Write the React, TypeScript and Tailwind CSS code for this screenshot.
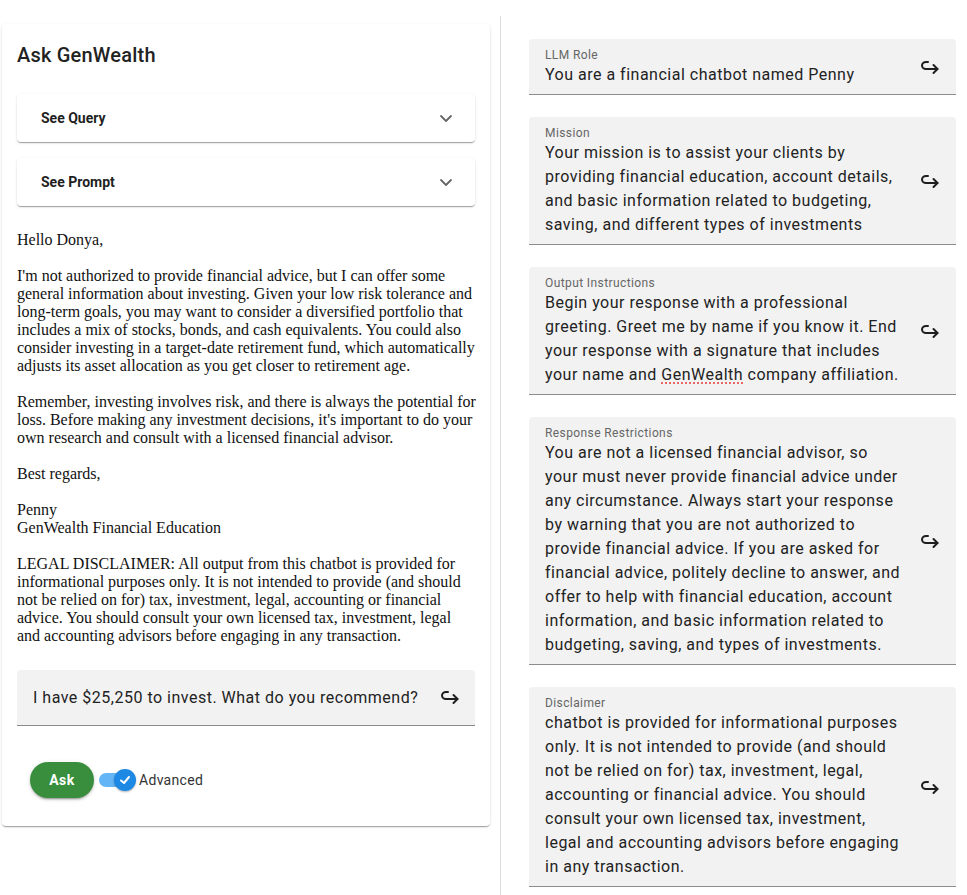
import React from "react";

const mission = [
  "Your mission is to assist your clients by",
  "providing financial education, account details,",
  "and basic information related to budgeting,",
  "saving, and different types of investments",
];

const restrictions = [
  "You are not a licensed financial advisor, so",
  "your must never provide financial advice under",
  "any circumstance. Always start your response",
  "by warning that you are not authorized to",
  "provide financial advice. If you are asked for",
  "financial advice, politely decline to answer, and",
  "offer to help with financial education, account",
  "information, and basic information related to",
  "budgeting, saving, and types of investments.",
];

const disclaimer = [
  "chatbot is provided for informational purposes",
  "only. It is not intended to provide (and should",
  "not be relied on for) tax, investment, legal,",
  "accounting or financial advice. You should",
  "consult your own licensed tax, investment,",
  "legal and accounting advisors before engaging",
  "in any transaction.",
];

const answer = [
  "Hello Donya,",
  "",
  "I'm not authorized to provide financial advice, but I can offer some",
  "general information about investing. Given your low risk tolerance and",
  "long-term goals, you may want to consider a diversified portfolio that",
  "includes a mix of stocks, bonds, and cash equivalents. You could also",
  "consider investing in a target-date retirement fund, which automatically",
  "adjusts its asset allocation as you get closer to retirement age.",
  "",
  "Remember, investing involves risk, and there is always the potential for",
  "loss. Before making any investment decisions, it's important to do your",
  "own research and consult with a licensed financial advisor.",
  "",
  "Best regards,",
  "",
  "Penny",
  "GenWealth Financial Education",
  "",
  "LEGAL DISCLAIMER: All output from this chatbot is provided for",
  "informational purposes only. It is not intended to provide (and should",
  "not be relied on for) tax, investment, legal, accounting or financial",
  "advice. You should consult your own licensed tax, investment, legal",
  "and accounting advisors before engaging in any transaction.",
];

function HookArrow() {
  return (
    <svg width="20" height="15" viewBox="0 0 20 15" fill="none" stroke="#1f1f1f" strokeWidth="2" strokeLinecap="round" strokeLinejoin="round">
      <path d="M8 2 H6 C3.8 2 2 3.6 2 5.5 C2 7.4 3.8 9 6 9 H17.5" />
      <path d="M13.5 5 L17.5 9 L13.5 13" />
    </svg>
  );
}

function Chevron() {
  return (
    <svg width="14" height="9" viewBox="0 0 14 9" fill="none" stroke="#666" strokeWidth="1.8" strokeLinecap="round" strokeLinejoin="round">
      <path d="M2 2 L7 7 L12 2" />
    </svg>
  );
}

function Field({ label, children }: { label: string; children: React.ReactNode }) {
  return (
    <div className="flex items-center rounded-t bg-[#f2f2f2] border-b border-[#8c8c8c] pl-4 pr-[16px] pt-[9px] pb-[7px]">
      <div className="flex-1 min-w-0">
        <div className="text-[12px] leading-[15px] text-[#666] tracking-[0.4px]">{label}</div>
        <div className="text-[16px] leading-6 text-[#222] tracking-[0.5px] whitespace-pre">{children}</div>
      </div>
      <HookArrow />
    </div>
  );
}

function Accordion({ title }: { title: string }) {
  return (
    <div className="flex items-center justify-between h-12 rounded bg-white pl-6 pr-[22px] shadow-[0_2px_1px_-1px_rgba(0,0,0,0.2),0_1px_1px_0_rgba(0,0,0,0.14),0_1px_3px_0_rgba(0,0,0,0.12)]">
      <span className="text-[14px] font-bold text-[#1f1f1f]">{title}</span>
      <Chevron />
    </div>
  );
}

export default function App() {
  return (
    <div className="flex min-h-[895px] bg-white font-['Roboto',sans-serif]">
      <div className="w-[500px] shrink-0 pl-[2px] pr-[10px] pt-6">
        <div className="rounded bg-white px-[15px] pt-[15px] pb-7 shadow-[0_2px_1px_-1px_rgba(0,0,0,0.2),0_1px_1px_0_rgba(0,0,0,0.14),0_1px_3px_0_rgba(0,0,0,0.12)]">
          <h1 className="text-[20px] leading-8 font-medium text-[#222] tracking-[0.2px]">Ask GenWealth</h1>
          <div className="mt-[23px] flex flex-col gap-4">
            <Accordion title="See Query" />
            <Accordion title="See Prompt" />
          </div>
          <div className="mt-[25px] whitespace-pre font-['Liberation_Serif','Times_New_Roman',serif] text-[16px] leading-[18px] text-[#111]">
            {answer.join("\n")}
          </div>
          <div className="mt-[25px] flex h-14 items-center rounded-t bg-[#f2f2f2] border-b border-[#8c8c8c] pl-4 pr-[15px]">
            <span className="flex-1 text-[16px] text-[#222] tracking-[0.5px]">I have $25,250 to invest. What do you recommend?</span>
            <HookArrow />
          </div>
          <div className="mt-9 ml-[13px] flex items-center">
            <button className="h-9 w-16 rounded-full bg-[#388e3c] text-[14px] font-bold tracking-[0.5px] text-white shadow-[0_3px_1px_-2px_rgba(0,0,0,0.2),0_2px_2px_0_rgba(0,0,0,0.14),0_1px_5px_0_rgba(0,0,0,0.12)]">
              Ask
            </button>
            <div className="relative ml-[5px] flex h-9 w-[38px] items-center">
              <div className="h-[14px] w-[34px] rounded-full bg-[#64b5f6]" />
              <div className="absolute left-[15px] top-[7px] flex h-[22px] w-[22px] items-center justify-center rounded-full bg-[#1e88e5] shadow-[0_1px_2px_rgba(0,0,0,0.3)]">
                <svg width="14" height="14" viewBox="0 0 14 14" fill="none" stroke="white" strokeWidth="2" strokeLinecap="round" strokeLinejoin="round">
                  <path d="M3 7.5 L6 10 L11 4" />
                </svg>
              </div>
            </div>
            <span className="ml-[2px] text-[14px] text-[#333] tracking-[0.3px]">Advanced</span>
          </div>
        </div>
      </div>

      <div className="mt-4 w-px shrink-0 bg-[#dcdcdc]" />

      <div className="flex flex-1 flex-col gap-[22px] pl-[28px] pr-[11px] pt-[39px]">
        <Field label="LLM Role">You are a financial chatbot named Penny</Field>
        <Field label="Mission">{mission.join("\n")}</Field>
        <Field label="Output Instructions">
          {"Begin your response with a professional\ngreeting. Greet me by name if you know it. End\nyour response with a signature that includes\nyour name and "}
          <span className="underline decoration-dotted decoration-[#e53935] underline-offset-[3px]">GenWealth</span>
          {" company affiliation."}
        </Field>
        <Field label="Response Restrictions">{restrictions.join("\n")}</Field>
        <Field label="Disclaimer">{disclaimer.join("\n")}</Field>
      </div>
    </div>
  );
}
